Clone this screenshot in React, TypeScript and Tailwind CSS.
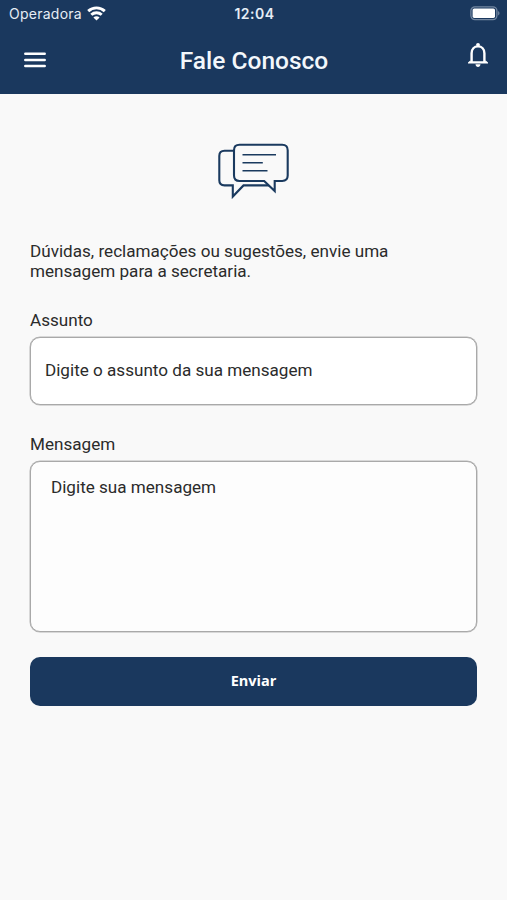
function StatusBar() {
  return (
    <div className="grid h-[27px] grid-cols-3 items-center pl-[9px] pr-[7px] font-['Inter',sans-serif] text-[#e6edf5]">
      <div className="flex items-center gap-[5px]">
        <span className="text-[14px] leading-none tracking-[0.25px]">Operadora</span>
        <svg width="19" height="15" viewBox="0 0 19 15" fill="none" stroke="#fff" strokeWidth="2.9">
          <path d="M1.2 5.1C5.8 0.8 13.2 0.8 17.8 5.1" />
          <path d="M4.3 8.8C7.3 6 11.7 6 14.7 8.8" />
          <path d="M9.5 14.5L6.4 11.6C8.2 9.9 10.8 9.9 12.6 11.6Z" fill="#fff" stroke="none" />
        </svg>
      </div>
      <span className="text-center text-[14px] font-semibold leading-none tracking-[0.5px]">12:04</span>
      <svg className="justify-self-end" width="30" height="15" viewBox="0 0 30 15">
        <rect x="0.9" y="0.8" width="26" height="12.8" rx="4" fill="none" stroke="#7387a1" strokeWidth="1.3" />
        <rect x="2.6" y="2.5" width="22.4" height="9.4" rx="1.6" fill="#fff" />
        <path d="M28.1 5C30 5.8 30 8.6 28.1 9.4Z" fill="#7387a1" />
      </svg>
    </div>
  );
}

function MenuIcon() {
  return (
    <svg width="22" height="16" viewBox="0 0 22 16" stroke="#fff" strokeWidth="2.5" strokeLinecap="round">
      <path d="M1.3 1.8H20.7M1.3 7.9H20.7M1.3 14H20.7" />
    </svg>
  );
}

function BellIcon() {
  return (
    <svg width="22" height="26" viewBox="0 0 22 26" fill="none" stroke="#fff" strokeWidth="2.4">
      <path d="M4.6 20V11.2C4.6 7 7.2 4.4 11 4.4S17.4 7 17.4 11.2V20" />
      <path d="M1 21.6V20.4L3.5 18.2V19.2H18.5V18.2L21 20.4V21.6Z" fill="#fff" stroke="none" />
      <circle cx="11" cy="2.8" r="1.9" fill="#fff" stroke="none" />
      <path d="M8.5 22.3H13.5C13.3 24 12.3 24.9 11 24.9S8.7 24 8.5 22.3Z" fill="#fff" stroke="none" />
    </svg>
  );
}

function ChatIcon() {
  return (
    <svg width="72" height="56" viewBox="0 0 72 56" fill="none" stroke="#1a3a5f" strokeWidth="2.1">
      <path d="M15.5 7.7H6.5Q1.3 7.7 1.3 13V37.3Q1.3 42.4 6.5 42.4H14.8V53.6L25.5 42.4H51" />
      <path d="M21.5 1.7H64.2Q69.7 1.7 69.7 7.2V32.6Q69.7 38 64.2 38H56.7V48L46.2 38H21.5Q16 38 16 32.6V7.2Q16 1.7 21.5 1.7Z" />
      <path d="M24.5 11.7H58M24.5 19.7H44.8M24.5 27.7H49.5" strokeWidth="1.6" />
    </svg>
  );
}

export default function App() {
  return (
    <div className="flex min-h-[900px] flex-col bg-[#f9f9f9] font-['Roboto',sans-serif] text-[#2b2b2b]">
      <header className="h-[94px] bg-[#1a385e]">
        <StatusBar />
        <div className="flex h-[67px] items-center justify-between pl-6 pr-[18px]">
          <button className="mb-[2px]" aria-label="Menu">
            <MenuIcon />
          </button>
          <h1 className="mr-[5px] mt-[2px] text-[24.5px] font-medium leading-none text-[#f3f7fb]">Fale Conosco</h1>
          <button className="mb-[11px]" aria-label="Notificações">
            <BellIcon />
          </button>
        </div>
      </header>

      <main className="flex flex-col px-[30px] pt-[49px]">
        <div className="flex justify-center">
          <ChatIcon />
        </div>

        <p className="mt-[42px] w-[380px] text-[17.1px] leading-5">
          Dúvidas, reclamações ou sugestões, envie uma mensagem para a secretaria.
        </p>

        <label htmlFor="assunto" className="mt-[29px] text-[17.1px] leading-5">
          Assunto
        </label>
        <input
          id="assunto"
          placeholder="Digite o assunto da sua mensagem"
          className="mt-[7px] h-[68px] rounded-[10px] border border-[#a9a9a9] bg-white px-[14px] pb-[3px] text-[17.1px] shadow-[0_0_0_0.5px_#b8b8b8] placeholder:text-[#2b2b2b]"
        />

        <label htmlFor="mensagem" className="mt-[29px] text-[17.1px] leading-5">
          Mensagem
        </label>
        <textarea
          id="mensagem"
          placeholder="Digite sua mensagem"
          className="mt-[7px] h-[171px] resize-none rounded-[10px] border border-[#a9a9a9] bg-[#fdfdfd] px-5 py-[15px] text-[17.1px] leading-5 shadow-[0_0_0_0.5px_#b8b8b8] placeholder:text-[#2b2b2b]"
        />

        <button className="mt-[25px] h-[49px] rounded-[10px] bg-[#1a385e] pb-px font-['Open_Sans',sans-serif] text-[14.5px] font-bold text-white">
          Enviar
        </button>
      </main>
    </div>
  );
}
